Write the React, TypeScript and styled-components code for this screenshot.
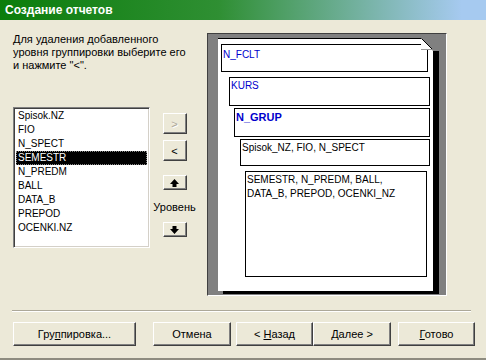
import React from 'react';
import styled, { createGlobalStyle } from 'styled-components';

const GlobalStyle = createGlobalStyle`
  html, body {
    margin: 0;
    padding: 0;
    background: #ece9d8;
  }
  body {
    font-family: "Liberation Sans", Arial, sans-serif;
    font-size: 11px;
    color: #000;
  }
`;

const Window = styled.div`
  width: 486px;
  height: 360px;
  box-sizing: border-box;
  background: #ece9d8;
  display: flex;
  flex-direction: column;
  border-bottom: 2px solid #8e8c80;
  overflow: hidden;
`;

const TitleBar = styled.div`
  height: 20px;
  flex: none;
  background: linear-gradient(90deg, #0b7d0b 0%, #2f8f33 45%, #a6caf0 95%);
  color: #fff;
  font-weight: bold;
  font-size: 12px;
  line-height: 21px;
  padding-left: 5px;
`;

const Body = styled.div`
  height: 290px;
  flex: none;
  display: flex;
  padding-left: 13px;
`;

const LeftColumn = styled.div`
  width: 137px;
  padding-top: 13px;
  display: flex;
  flex-direction: column;
`;

const Hint = styled.div`
  font-size: 11px;
  line-height: 13px;
  white-space: nowrap;
`;

const ListBox = styled.div`
  margin-top: 35px;
  height: 141px;
  box-sizing: border-box;
  background: #fff;
  border: 1px solid;
  border-color: #808080 #fff #fff #808080;
  box-shadow: inset 1px 1px #404040, inset -1px -1px #d4d0c8;
  padding: 1px 2px;
`;

const ListItem = styled.div<{ $selected?: boolean }>`
  height: 14px;
  line-height: 14px;
  font-size: 10px;
  padding-left: 2px;
  background: ${p => (p.$selected ? '#000' : 'transparent')};
  color: ${p => (p.$selected ? '#fff' : '#000')};
  outline: ${p => (p.$selected ? '1px dotted #888' : 'none')};
  outline-offset: -1px;
`;

const MiddleColumn = styled.div`
  width: 57px;
  box-sizing: border-box;
  padding: 93px 8px 0 0;
  display: flex;
  flex-direction: column;
  align-items: center;
`;

const SideButton = styled.div<{ $h: number; $mt: number; $disabled?: boolean }>`
  width: 24px;
  height: ${p => p.$h}px;
  margin-top: ${p => p.$mt}px;
  box-sizing: border-box;
  background: #ece9d8;
  border: 1px solid;
  border-color: #fff #404040 #404040 #fff;
  box-shadow: inset -1px -1px #808080;
  display: flex;
  align-items: center;
  justify-content: center;
  font-size: 11px;
  color: ${p => (p.$disabled ? '#aca899' : '#000')};
  text-shadow: ${p => (p.$disabled ? '1px 1px #fff' : 'none')};
`;

const LevelLabel = styled.div`
  margin-top: 10px;
  line-height: 14px;
  font-size: 11px;
  white-space: nowrap;
`;

const Preview = styled.div`
  margin-top: 13px;
  width: 240px;
  height: 263px;
  box-sizing: border-box;
  background: #808080;
  border: 1px solid;
  border-color: #404040 #fff #fff #404040;
  padding: 4px 0 0 10px;
`;

const Page = styled.div`
  position: relative;
  width: 215px;
  height: 253px;
  box-sizing: border-box;
  background: #fff;
  border-top: 1px solid #000;
  display: flex;
  flex-direction: column;

  &::before {
    content: '';
    position: absolute;
    top: 12px;
    right: -6px;
    width: 6px;
    bottom: -3px;
    background: #000;
  }

  &::after {
    content: '';
    position: absolute;
    left: 5px;
    right: -6px;
    bottom: -3px;
    height: 3px;
    background: #000;
  }
`;

const Fold = styled.svg`
  position: absolute;
  top: -1px;
  right: 0;
`;

const Band = styled.div<{
  $ml: number;
  $mr: number;
  $mt: number;
  $h: number;
  $pt?: number;
  $blue?: boolean;
  $bold?: boolean;
}>`
  margin: ${p => `${p.$mt}px ${p.$mr}px 0 ${p.$ml}px`};
  height: ${p => p.$h}px;
  box-sizing: border-box;
  border: 1px solid #000;
  padding: ${p => p.$pt ?? 1}px 1px 0;
  font-size: ${p => (p.$bold ? 11 : 10)}px;
  font-weight: ${p => (p.$bold ? 'bold' : 'normal')};
  line-height: 14px;
  color: ${p => (p.$blue ? '#0000cc' : '#000')};
`;

const Separator = styled.div`
  height: 0;
  margin: 0 15px 0 12px;
  border-top: 1px solid #aca899;
  border-bottom: 1px solid #fff;
`;

const ButtonRow = styled.div`
  display: flex;
  padding: 10px 0 0 13px;
`;

const PushButton = styled.div<{ $w: number; $ml?: number }>`
  width: ${p => p.$w}px;
  height: 24px;
  margin-left: ${p => p.$ml ?? 0}px;
  box-sizing: border-box;
  background: #ece9d8;
  border: 1px solid;
  border-color: #fff #404040 #404040 #fff;
  box-shadow: inset -1px -1px #808080;
  display: flex;
  align-items: center;
  justify-content: center;
  font-size: 11px;
  white-space: pre;
`;

const fields = ['Spisok.NZ', 'FIO', 'N_SPECT', 'SEMESTR', 'N_PREDM', 'BALL', 'DATA_B', 'PREPOD', 'OCENKI.NZ'];

const ArrowUp = () => (
  <svg width="9" height="8" viewBox="0 0 9 8">
    <polygon points="4.5,0 9,5 6.5,5 6.5,8 2.5,8 2.5,5 0,5" fill="#000" />
  </svg>
);

const ArrowDown = () => (
  <svg width="9" height="8" viewBox="0 0 9 8">
    <polygon points="2.5,0 6.5,0 6.5,3 9,3 4.5,8 0,3 2.5,3" fill="#000" />
  </svg>
);

export default function App() {
  return (
    <>
      <GlobalStyle />
      <Window>
        <TitleBar>Создание отчетов</TitleBar>
        <Body>
          <LeftColumn>
            <Hint>
              Для удаления добавленного
              <br />
              уровня группировки выберите его
              <br />
              и нажмите "&lt;".
            </Hint>
            <ListBox>
              {fields.map(f => (
                <ListItem key={f} $selected={f === 'SEMESTR'}>
                  {f}
                </ListItem>
              ))}
            </ListBox>
          </LeftColumn>

          <MiddleColumn>
            <SideButton $h={21} $mt={0} $disabled>
              &gt;
            </SideButton>
            <SideButton $h={21} $mt={6}>
              &lt;
            </SideButton>
            <SideButton $h={15} $mt={14}>
              <ArrowUp />
            </SideButton>
            <LevelLabel>Уровень</LevelLabel>
            <SideButton $h={15} $mt={8}>
              <ArrowDown />
            </SideButton>
          </MiddleColumn>

          <Preview>
            <Page>
              <Fold width="12" height="13" viewBox="0 0 12 13">
                <polygon points="0,0 12,0 12,13" fill="#808080" />
                <polygon points="0,0 0,11 11,11" fill="#fff" />
                <line x1="0.5" y1="0.5" x2="11" y2="11" stroke="#000" strokeWidth="1" />
                <line x1="0" y1="11.5" x2="11" y2="11.5" stroke="#9a9a9a" strokeWidth="1" />
              </Fold>
              <Band $ml={3} $mr={5} $mt={5} $h={28} $pt={3} $blue>
                N_FCLT
              </Band>
              <Band $ml={11} $mr={3} $mt={5} $h={29} $blue>
                KURS
              </Band>
              <Band $ml={16} $mr={3} $mt={2} $h={29} $blue $bold>
                N_GRUP
              </Band>
              <Band $ml={22} $mr={3} $mt={2} $h={27}>
                Spisok_NZ, FIO, N_SPECT
              </Band>
              <Band $ml={27} $mr={6} $mt={5} $h={106}>
                SEMESTR, N_PREDM, BALL,
                <br />
                DATA_B, PREPOD, OCENKI_NZ
              </Band>
            </Page>
          </Preview>
        </Body>

        <Separator />

        <ButtonRow>
          <PushButton $w={123}>
            <span>
              Гру<u>п</u>пировка...
            </span>
          </PushButton>
          <PushButton $w={78} $ml={17}>
            Отмена
          </PushButton>
          <PushButton $w={77} $ml={5}>
            <span>
              &lt; <u>Н</u>азад
            </span>
          </PushButton>
          <PushButton $w={78}>
            <span>
              <u>Д</u>алее &gt;
            </span>
          </PushButton>
          <PushButton $w={77} $ml={7}>
            <span>
              <u>Г</u>отово
            </span>
          </PushButton>
        </ButtonRow>
      </Window>
    </>
  );
}
